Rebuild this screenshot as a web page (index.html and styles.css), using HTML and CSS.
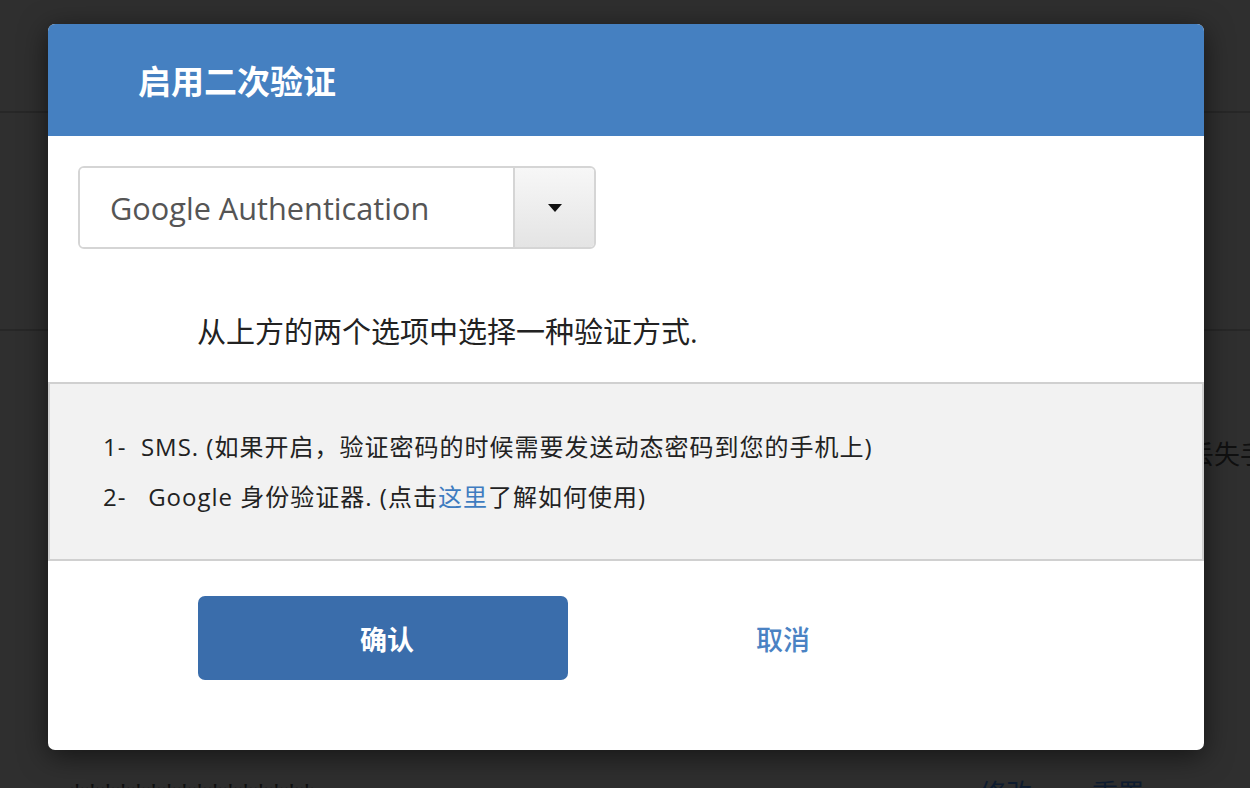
FILE: index.html
```html
<!DOCTYPE html>
<html lang="zh-CN">
<head>
<meta charset="utf-8">
<title>启用二次验证</title>
<link rel="stylesheet" href="styles.css">
</head>
<body>
<div class="page">
  <div class="row row-top"></div>
  <div class="row row-mid"></div>
  <div class="row row-lost">
    <div class="nav-item"></div>
    <span class="lost-text">丢失手机</span>
  </div>
  <div class="row row-bottom">
    <span class="stars">****************</span>
    <span class="actions"><span class="act">修改</span><span class="act">重置</span></span>
  </div>
</div>

<div class="modal">
  <div class="modal-header">启用二次验证</div>
  <div class="modal-body">
    <div class="select">
      <div class="select-text">Google Authentication</div>
      <div class="select-btn"><span class="caret"></span></div>
    </div>
    <p class="hint">从上方的两个选项中选择一种验证方式.</p>
  </div>
  <div class="info">
    <div class="info-line">1-  SMS. (如果开启，验证密码的时候需要发送动态密码到您的手机上)</div>
    <div class="info-line">2-   Google 身份验证器. (点击<a class="link">这里</a>了解如何使用)</div>
  </div>
  <div class="modal-footer">
    <button class="btn btn-primary">确认</button>
    <button class="btn btn-link">取消</button>
  </div>
</div>
</body>
</html>
```
FILE: styles.css
```css
* { box-sizing: border-box; }
html, body { margin: 0; padding: 0; }
body {
  width: 1250px;
  height: 788px;
  overflow: hidden;
  background: #2f2f2f;
  font-family: "Open Sans", "Noto Sans CJK SC", sans-serif;
  position: relative;
}
.page { width: 1250px; height: 788px; overflow: hidden; }
.row { border-bottom: 2px solid #272727; box-sizing: content-box; }
.row-top { height: 111px; }
.row-mid { height: 216px; }
.row-lost {
  height: 294px;
  display: flex;
  align-items: flex-start;
  padding-top: 46px;
  border-bottom: none;
}
.nav-item {
  width: 10px;
  height: 80px;
  background: #0b1829;
  border-radius: 0 4px 4px 0;
}
.lost-text {
  margin-left: 1188px;
  margin-top: 57px;
  font-size: 26px;
  color: #101010;
  white-space: nowrap;
}
.row-bottom {
  display: flex;
  align-items: flex-start;
  padding: 107px 0 0 70px;
  font-size: 26px;
  line-height: 30px;
  height: 30px;
  border-bottom: none;
}
.stars { color: #111; letter-spacing: 1px; width: 910px; }
.actions { display: flex; gap: 60px; color: #0e1c30; }

.modal {
  position: absolute;
  left: 48px;
  top: 24px;
  width: 1156px;
  background: #fff;
  border-radius: 7px;
  overflow: hidden;
  box-shadow: 0 6px 28px rgba(0, 0, 0, 0.55);
}
.modal-header {
  height: 112px;
  background: #4580c1;
  color: #fff;
  display: flex;
  align-items: center;
  padding-left: 90px;
  font-size: 33px;
  font-weight: 700;
  font-family: "Noto Sans CJK SC", sans-serif;
}
.modal-body { padding: 30px 30px 0; }
.select {
  display: flex;
  width: 518px;
  height: 83px;
  border: 2px solid #d5d5d5;
  border-radius: 6px;
  overflow: hidden;
}
.select-text {
  flex: 1;
  display: flex;
  align-items: center;
  padding-left: 30px;
  font-size: 30.7px;
  color: #555;
  background: #fff;
}
.select-btn {
  width: 81px;
  border-left: 2px solid #d5d5d5;
  background: linear-gradient(#f7f7f7, #e4e4e4);
  display: flex;
  align-items: center;
  justify-content: center;
}
.caret {
  width: 0;
  height: 0;
  border-left: 7px solid transparent;
  border-right: 7px solid transparent;
  border-top: 8px solid #111;
}
.hint {
  margin: 63px 0 30px;
  padding-left: 119px;
  font-size: 29px;
  line-height: 40px;
  height: 40px;
  color: #222;
}
.info {
  height: 179px;
  background: #f2f2f2;
  border: 2px solid #d0d0d0;
  padding: 38px 0 0 53px;
}
.info-line {
  white-space: pre;
  font-size: 24px;
  letter-spacing: 1px;
  line-height: 50px;
  color: #222;
}
.link { color: #3f7cc0; text-decoration: none; }
.modal-footer {
  display: flex;
  gap: 30px;
  padding: 35px 0 70px 150px;
}
.btn {
  width: 370px;
  height: 84px;
  border: none;
  border-radius: 7px;
  font-family: "Noto Sans CJK SC", sans-serif;
  font-size: 27px;
  font-weight: 700;
  padding: 0;
}
.btn-primary { background: #3a6dab; color: #fff; padding-left: 8px; }
.btn-link { background: transparent; color: #4a82c3; font-weight: 500; }
```
